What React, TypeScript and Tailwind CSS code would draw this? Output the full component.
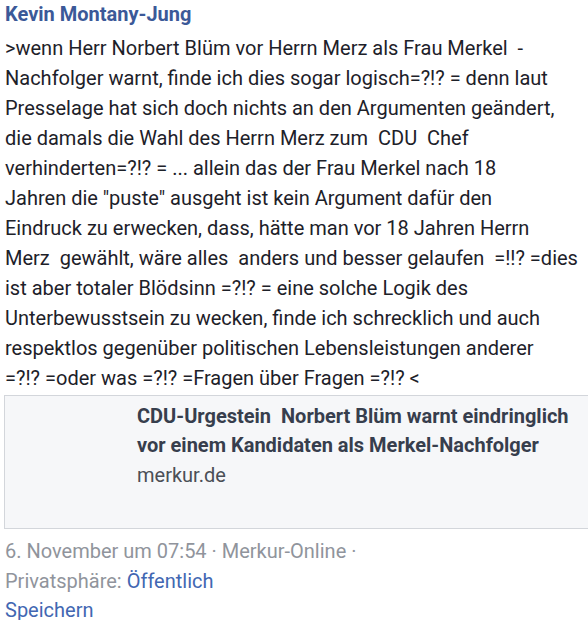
const bodyLines = [
  ">wenn Herr Norbert Blüm vor Herrn Merz als Frau Merkel  -",
  "Nachfolger warnt, finde ich dies sogar logisch=?!? = denn laut",
  "Presselage hat sich doch nichts an den Argumenten geändert,",
  "die damals die Wahl des Herrn Merz zum  CDU  Chef",
  "verhinderten=?!? = ... allein das der Frau Merkel nach 18",
  "Jahren die \"puste\" ausgeht ist kein Argument dafür den",
  "Eindruck zu erwecken, dass, hätte man vor 18 Jahren Herrn",
  "Merz  gewählt, wäre alles  anders und besser gelaufen  =!!? =dies",
  "ist aber totaler Blödsinn =?!? = eine solche Logik des",
  "Unterbewusstsein zu wecken, finde ich schrecklich und auch",
  "respektlos gegenüber politischen Lebensleistungen anderer",
  "=?!? =oder was =?!? =Fragen über Fragen =?!? <",
];

export default function App() {
  return (
    <div className="w-[588px] h-[620px] overflow-hidden bg-white font-['Roboto',sans-serif]">
      <div className="pl-[5px] pt-[1px]">
        <div className="text-[20px] leading-[26px] font-bold text-[#3b5998]">Kevin Montany-Jung</div>
        <div className="mt-[6px] text-[20px] leading-[30px] text-[#1d2129]">
          {bodyLines.map((l) => (
            <div key={l} className="whitespace-pre">{l}</div>
          ))}
        </div>
      </div>
      <div className="ml-[4px] mt-[2px] h-[134px] border border-[#d3d6db] border-r-0 bg-[#f6f7f9] pl-[132px] pt-[6px]">
        <div className="whitespace-pre text-[20px] leading-[29px] font-bold text-[#373e4d]">
          {"CDU-Urgestein  Norbert Blüm warnt eindringlich"}
          <br />
          vor einem Kandidaten als Merkel-Nachfolger
        </div>
        <div className="text-[20px] leading-[30px] text-[#4b4f56]">merkur.de</div>
      </div>
      <div className="pl-[5px] mt-[7px] text-[20px] leading-[30px] text-[#90949c]">
        <div>6. November um 07:54 · Merkur-Online ·</div>
        <div>
          Privatsphäre: <span className="text-[#4267b2]">Öffentlich</span>
        </div>
        <div className="-mt-[1px] text-[#4267b2]">Speichern</div>
      </div>
    </div>
  );
}
